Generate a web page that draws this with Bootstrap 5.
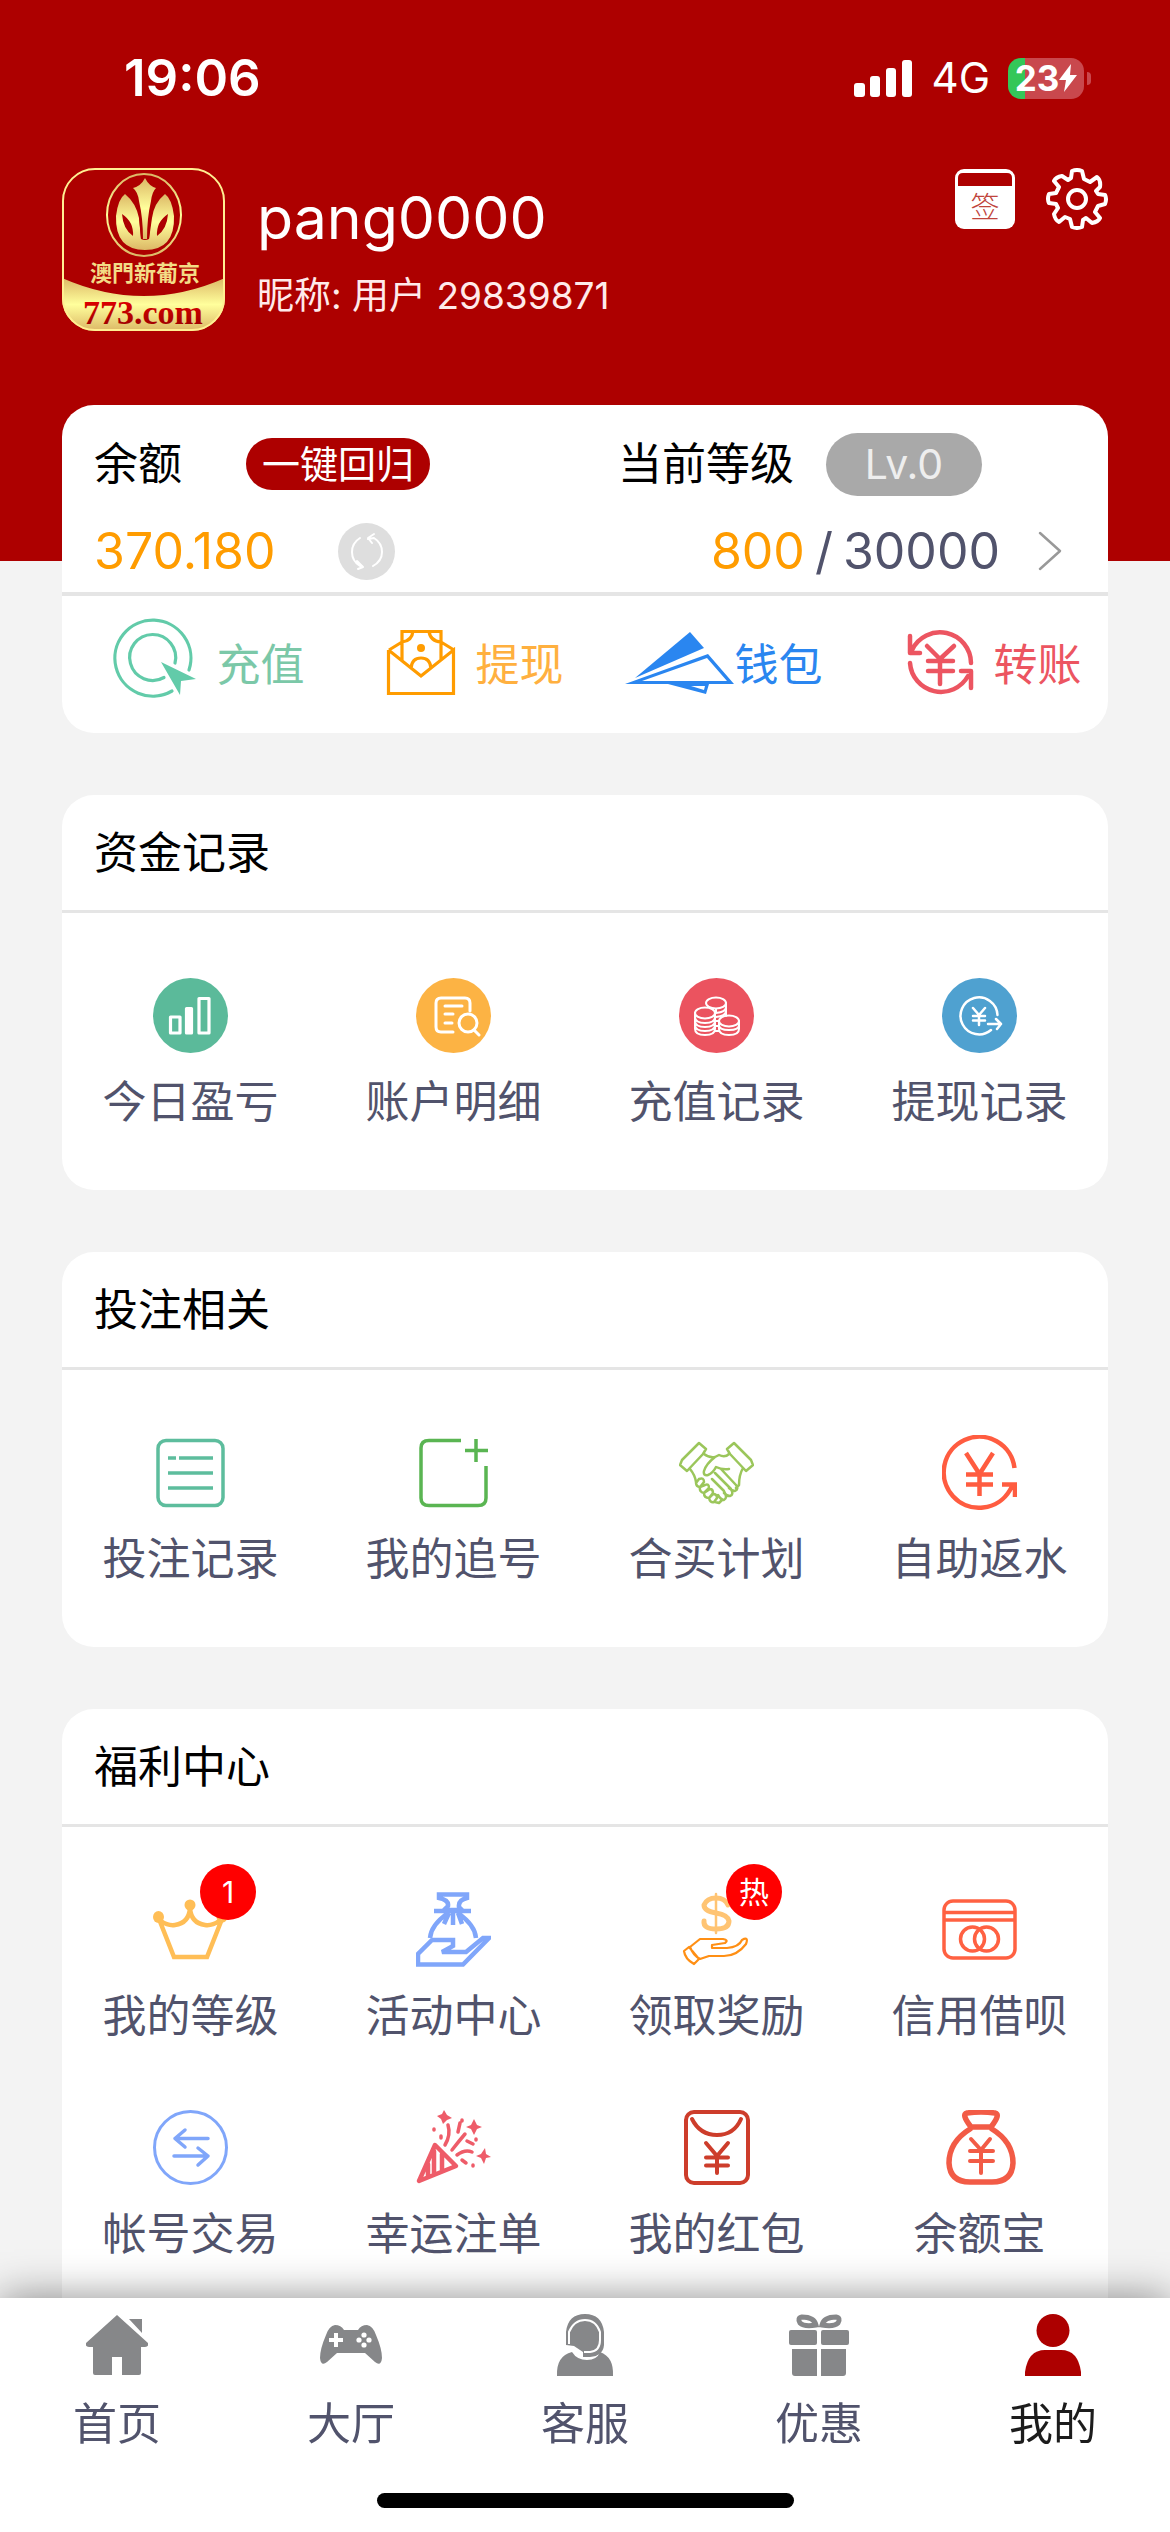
<!DOCTYPE html>
<html lang="zh-CN">
<head>
<meta charset="utf-8">
<meta name="viewport" content="width=device-width, initial-scale=1">
<title>我的</title>
<link href="https://cdn.jsdelivr.net/npm/bootstrap@5.3.0/dist/css/bootstrap.min.css" rel="stylesheet">
<style>
:root { --brand: #ad0000; --ink: #51536c; --line: #e5e5e5; }
body { background: #f3f3f3; color: #000; font-family: Inter, "Noto Sans CJK SC", sans-serif; font-size: 44px; line-height: 66px; }
a { color: inherit; text-decoration: none; }
svg { display: block; flex: none; }
.ln { fill: none; stroke: currentColor; stroke-linecap: round; stroke-linejoin: round; }

.top-zone { background: var(--brand); color: #fff; padding-bottom: 230px; }
.status-bar { height: 156px; padding: 0 79px 0 124px; }
.clock { font-size: 51px; font-weight: 600; }
.net { font-size: 42px; margin: 0 18px 0 20px; }
.battery { width: 76px; height: 41px; border-radius: 13px; font-size: 35px; font-weight: 700; line-height: 41px; background: linear-gradient(90deg, #34c759 23%, #c9484d 23%); margin-right: 3px; }
.nub { width: 4px; height: 13px; border-radius: 0 4px 4px 0; background: #c9484d; }
.profile { padding: 12px 62px 0; }
.user-box { margin-left: 32px; padding-top: 14px; }
.user-name { font-size: 59px; font-weight: 400; line-height: 72px; margin: 0; }
.nick { font-size: 37px; line-height: 54px; margin-top: 15px; color: #ffeaea; }
.tools { gap: 31px; }
.plain { border: 0; background: none; padding: 0; color: inherit; }

.sheet { background: #fff; border-radius: 32px; margin: 0 62px 62px; }
.wallet { margin-top: -156px; }
.wallet-top { padding: 26px 46px 12px 32px; border-bottom: 4px solid var(--line); }
.line-a { height: 63px; }
.line-b { height: 58px; margin-top: 28px; font-size: 50px; }
.pill-red { background: var(--brand); color: #fff; border: 0; border-radius: 26px; height: 52px; width: 184px; font-size: 38px; line-height: 52px; padding: 0; margin-left: 64px; }
.pill-grey { background: #a9a9a9; color: #eee; border-radius: 32px; width: 156px; height: 63px; line-height: 63px; font-size: 41px; margin-left: 32px; }
.gold { color: #ff9c00; }
.slate { color: var(--ink); }
.slash { margin: 0 10px; }
.chev { margin-left: 38px; color: #999; }
.right-half { padding-left: 40px; }
.refresh { margin-left: 62px; }
.actions { padding: 20px 0 19px 14px; margin-right: -4px; }
.actions a { flex: 1 1 0; }
.t-green { color: #7bc8a8; } .t-amber { color: #ffb03f; } .t-blue { color: #2a86f0; } .t-red { color: #ec5561; }

.sheet-title { font-size: 44px; font-weight: 400; line-height: 66px; margin: 0; padding: 25px 32px 24px; border-bottom: 3px solid var(--line); }
.tiles { margin: 0 -3px; padding: 65px 0 55px; row-gap: 61px; }
.tile { display: flex; flex-direction: column; align-items: center; gap: 16px; padding: 0; color: var(--ink); }
.tile-icon { position: relative; }
.flag { position: absolute; left: 47px; top: -28px; width: 56px; height: 56px; border-radius: 50%; background: #f00; color: #fff; font-size: 30px; line-height: 56px; text-align: center; }
.last-sheet { margin-bottom: 0; }

.tab-bar { background: #fff; box-shadow: 0 0 40px rgba(0,0,0,.45); padding: 16px 0 24px; color: var(--ink); }
.tab-bar a { flex: 1 1 0; display: flex; flex-direction: column; align-items: center; gap: 15px; }
.tab-bar svg { color: #868789; }
.tab-bar .now { color: #1c1c1c; }
.tab-bar .now svg { color: var(--brand); }
.home-line { width: 417px; height: 15px; border-radius: 8px; background: #000; margin: 36px auto 0; }
</style>
<script src="https://cdn.jsdelivr.net/npm/bootstrap@5.3.0/dist/js/bootstrap.bundle.min.js"></script>
</head>
<body class="d-flex flex-column min-vh-100">

<header class="top-zone">
  <div class="status-bar d-flex align-items-center justify-content-between">
    <span class="clock">19:06</span>
    <div class="d-flex align-items-center">
      <svg width="58" height="37" viewBox="0 0 58 37" fill="#fff"><rect y="23" width="11" height="14" rx="3"/><rect x="16" y="16" width="10" height="21" rx="3"/><rect x="32" y="8" width="10" height="29" rx="3"/><rect x="48" width="10" height="37" rx="3"/></svg>
      <span class="net">4G</span>
      <span class="battery d-flex align-items-center justify-content-center">23<svg width="18" height="28" viewBox="0 0 18 28" fill="#fff"><path d="M12 0 0 16h7L5 28 18 11h-7z"/></svg></span>
      <span class="nub"></span>
    </div>
  </div>
  <div class="profile d-flex align-items-start">
    <svg width="163" height="163" viewBox="0 0 163 163" role="img" aria-label="澳門新葡京">
      <defs>
        <linearGradient id="gold1" x1="0" y1="0" x2="0" y2="1"><stop offset="0" stop-color="#dcb866"/><stop offset=".5" stop-color="#ffff9c"/><stop offset="1" stop-color="#dcb866"/></linearGradient>
        <linearGradient id="redtext" x1="0" y1="0" x2="0" y2="1"><stop offset="0" stop-color="#f00000"/><stop offset="1" stop-color="#900000"/></linearGradient>
        <clipPath id="logoClip"><rect width="163" height="163" rx="33"/></clipPath>
      </defs>
      <g clip-path="url(#logoClip)">
        <rect width="163" height="163" fill="#ad0000"/>
        <path d="M0 110Q82 146 163 110V163H0Z" fill="url(#gold1)"/>
      </g>
      <rect x="1" y="1" width="161" height="161" rx="32" fill="none" stroke="#ffef92" stroke-width="2"/>
      <ellipse cx="82" cy="47" rx="37" ry="41" fill="none" stroke="url(#gold1)" stroke-width="2"/>
      <path d="M63 26Q56 31 54 48Q53 82 83 82T112 48Q110 31 103 26Q92 35 90 50L87 71Q83 73 79 71L77 50Q74 35 63 26Z" fill="url(#gold1)"/>
      <path d="M69 18H97L90 36 87 71H79L76 36Z" fill="#ad0000"/>
      <path d="M83 10Q87 18 94 20Q90 24 89 33Q85 50 85 71H81Q81 50 77 33Q76 24 71 20Q79 18 83 10Z" fill="url(#gold1)"/>
      <path d="M60 46Q72 54 71 68Q61 61 60 46ZM106 46Q94 54 95 68Q105 61 106 46Z" fill="#ad0000"/>
      <text x="83" y="113" text-anchor="middle" font-family="'Liberation Serif','Noto Sans CJK TC',serif" font-weight="700" font-size="22" fill="#f3dc86">澳門新葡京</text>
      <text x="81" y="156" text-anchor="middle" font-family="'Liberation Serif',serif" font-weight="700" font-size="34" fill="url(#redtext)">773.com</text>
    </svg>
    <div class="user-box flex-grow-1">
      <h1 class="user-name">pang0000</h1>
      <div class="nick">昵称: 用户 29839871</div>
    </div>
    <div class="tools d-flex">
      <button class="plain" type="button" aria-label="签到">
        <svg width="60" height="61" viewBox="0 0 60 61"><rect width="60" height="60" rx="9" fill="#fff"/><path d="M3 17V9Q3 4 8 4H52Q57 4 57 9V17Z" fill="#ad0000"/><text x="30" y="49" text-anchor="middle" font-size="29" font-family="'Noto Sans CJK SC',sans-serif" font-weight="300" fill="#c0443c">签</text></svg>
      </button>
      <button class="plain" type="button" aria-label="设置">
        <svg width="62" height="62" viewBox="0 0 62 62"><path class="ln" stroke-width="4" d="M26 3Q31 1 36 3L38 11 44 14 51 9Q55 12 54 19L50 23 52 26 59 27Q61 31 59 36L52 38 49 44 54 50Q52 54 46 55L40 50 37 52 36 59Q31 61 26 59L24 51 19 49 13 54Q9 52 8 46L12 40 10 36 3 35Q1 31 3 26L10 25 13 19 8 13Q10 9 16 8L22 12 25 10Z"/><circle class="ln" cx="31" cy="31" r="9" stroke-width="4"/></svg>
      </button>
    </div>
  </div>
</header>

<main class="d-flex flex-column flex-grow-1">
  <section class="sheet wallet">
    <div class="wallet-top">
      <div class="row g-0 line-a align-items-center">
        <div class="col-6 d-flex align-items-center"><span>余额</span><button class="pill-red" type="button">一键回归</button></div>
        <div class="col-6 right-half d-flex align-items-center"><span>当前等级</span><span class="pill-grey text-center">Lv.0</span></div>
      </div>
      <div class="line-b d-flex align-items-center">
        <span class="gold">370.180</span>
        <button class="plain refresh" type="button" aria-label="刷新">
          <svg width="57" height="57" viewBox="0 0 57 57" color="#fff"><circle cx="28.5" cy="28.5" r="28.5" fill="#dedede"/><path class="ln" stroke-width="2" d="M22 15Q14 20 14 29Q14 38 22 43M19 38 25 44 20 46M35 43Q44 38 44 29Q44 20 36 15L30 16M36 11 30 15 34 20"/></svg>
        </button>
        <a href="#level" class="slate d-flex align-items-center ms-auto"><span class="gold">800</span><span class="slash">/</span><span>30000</span>
          <svg class="chev" width="24" height="40" viewBox="0 0 24 40"><path class="ln" stroke-width="2.5" d="M2 2 22 20 2 38"/></svg></a>
      </div>
    </div>
    <nav class="actions d-flex">
      <a href="#deposit" class="d-flex align-items-center justify-content-center t-green">
        <svg width="110" height="98" viewBox="0 0 110 98" color="#62cba9"><path class="ln" stroke-width="3.2" d="M65 75A38 38 0 1 1 82 54M57 61.5A23 23 0 1 1 68 47"/><path fill="currentColor" d="M54 46 89 63 74 65 73 79Z"/></svg>充值</a>
      <a href="#withdraw" class="d-flex align-items-center justify-content-center t-amber">
        <svg width="110" height="98" viewBox="0 0 110 98" fill="none" stroke="#ff9c00" stroke-width="3.2"><path d="M22.5 34V77.5H87.5V34L55 60 22.5 34M36 44V15.5H75V44M36 26 23 34M75 26 88 34M36 26Q46 25 47 15M75 26Q64 25 63 15M45 52Q46 42 55 42T65 52"/><circle cx="55" cy="32" r="4" fill="#ff9c00" stroke="none"/></svg>提现</a>
      <a href="#wallet" class="d-flex align-items-center justify-content-center t-blue">
        <svg width="110" height="98" viewBox="0 0 110 98" fill="#2a86f0"><path d="M65 16 79 32 10 62Z"/><path fill-rule="evenodd" d="M0 68 83 38 109 68ZM17 65H102L82 42ZM43 68 81 78 84 68ZM66 70 79 74 80 70Z"/></svg>钱包</a>
      <a href="#transfer" class="d-flex align-items-center justify-content-center t-red">
        <svg width="110" height="98" viewBox="0 0 110 98"><path class="ln" stroke-width="4.5" d="M87 47A31 31 0 0 0 28 34M26 20V37H36M26 47A31 31 0 0 0 84 60M77 55H87V72M43 30 56 43 70 30M56 43V68M44 45H69M44 55H69"/></svg>转账</a>
    </nav>
  </section>

  <section class="sheet">
    <h2 class="sheet-title">资金记录</h2>
    <div class="row tiles">
      <a class="col-3 tile" href="#today"><svg width="75" height="75" viewBox="0 0 75 75"><circle cx="37.5" cy="37.5" r="37.5" fill="#5bba9a"/><g fill="none" stroke="#fff" stroke-width="3.2" stroke-linejoin="round"><path d="M17.5 39H27V55H17.5ZM46 20.5H56V55H46Z"/><path fill="#fff" d="M33.5 30.5H38.5V55H33.5Z"/></g></svg>今日盈亏</a>
      <a class="col-3 tile" href="#detail"><svg width="75" height="75" viewBox="0 0 75 75" color="#fff"><circle cx="37.5" cy="37.5" r="37.5" fill="#fcb344"/><path class="ln" stroke-width="3" d="M54 33V25Q54 20 49 20H25Q20 20 20 25V49Q20 54 25 54H37M29 28H46M29 36H37M29 45H36M58 52 63 57"/><circle class="ln" cx="52" cy="45" r="9" stroke-width="3"/></svg>账户明细</a>
      <a class="col-3 tile" href="#deposits"><svg width="75" height="75" viewBox="0 0 75 75" color="#fff"><circle cx="37.5" cy="37.5" r="37.5" fill="#eb535f"/><g class="ln" stroke-width="2"><ellipse cx="37" cy="25" rx="10" ry="5.5"/><ellipse cx="26" cy="35" rx="10" ry="5.5"/><ellipse cx="50" cy="43" rx="10" ry="5.5"/><path d="M16 35V51Q16 57 26 57T36 51V35M16 39Q16 45 26 45T36 39M16 43Q16 49 26 49T36 43M16 47Q16 53 26 53T36 47M40 43V51Q40 57 50 57T60 51V43M40 47Q40 52 50 52T60 47M47 25V38M37 35Q47 34 47 29M37 39Q47 38 47 33M37 31V35M36 43H40M36 48H40M36 53H40"/></g></svg>充值记录</a>
      <a class="col-3 tile" href="#withdrawals"><svg width="75" height="75" viewBox="0 0 75 75" color="#fff"><circle cx="37.5" cy="37.5" r="37.5" fill="#4fa1d0"/><path class="ln" stroke-width="2.5" d="M55.500 37A18.500 18.500 0 1 0 49 52M46 46H59M54 41 59 46 55 51M31 30 37 37 43 30M37 37V47M31 38H43M31 42.5H43"/></svg>提现记录</a>
    </div>
  </section>

  <section class="sheet">
    <h2 class="sheet-title">投注相关</h2>
    <div class="row tiles">
      <a class="col-3 tile" href="#bets"><svg width="75" height="75" viewBox="0 0 75 75" color="#5dbd9d"><rect class="ln" x="5" y="5.5" width="65" height="65" rx="8" stroke-width="3.5"/><path d="M15 23H23M26 23H60M15 38H60M15 53H60" stroke="currentColor" stroke-width="3.5"/></svg>投注记录</a>
      <a class="col-3 tile" href="#chase"><svg width="75" height="75" viewBox="0 0 75 75" color="#5ab552"><path fill="none" stroke="currentColor" stroke-width="3.5" d="M45 5.5H13Q5 5.5 5 13V63Q5 70.5 13 70.5H62Q70 70.5 70 63V31M60 4V27M49 15.5H72"/></svg>我的追号</a>
      <a class="col-3 tile" href="#group"><svg width="75" height="75" viewBox="0 0 75 75" color="#9bc65b"><path class="ln" stroke-width="2.5" d="M20 8 27 14 24 19 8 36 1 30 3 25ZM55 8 48 14 51 19 67 36 74 30 72 25ZM25 19Q30 23 36 22M50 19Q46 23 40 20L36 22Q27 29 25 36Q24 41 29 40Q34 38 37 32Q43 35 50 34M42 34 57 50Q60 54 56 56 53 56 50 53M36 38 52 54Q55 60 51 61 48 61 45 58M33 44 45 56Q49 63 45 65 42 65 39 60M64 33Q60 40 60 50L57 53M11 34Q16 40 17 47Q17 52 21 52L25 47Q25 42 20 44L17 48M21 52Q20 57 25 58L30 53Q30 48 26 50ZM25 58Q25 63 30 63L34 58Q34 54 31 54ZM30 63Q31 68 35 67L38 63Q38 59 34 59ZM36 67 40 68 43 65"/></svg>合买计划</a>
      <a class="col-3 tile" href="#rebate"><svg width="75" height="75" viewBox="0 0 75 75" color="#ff5c40"><path fill="none" stroke="currentColor" stroke-width="4.5" d="M72.5 33A35.5 35.5 0 1 0 68 55L71 50M60 49.5H73V62M24 18 37.5 39 51 18M37.5 39V61M24 39.5H51M24 49.5H51"/></svg>自助返水</a>
    </div>
  </section>

  <section class="sheet last-sheet flex-grow-1">
    <h2 class="sheet-title">福利中心</h2>
    <div class="row tiles">
      <a class="col-3 tile" href="#rank"><span class="tile-icon"><svg width="75" height="75" viewBox="0 0 75 75" color="#ffbe56"><g fill="currentColor"><ellipse cx="5.5" cy="25" rx="5.5" ry="6"/><circle cx="37" cy="13" r="5.500"/><circle cx="69" cy="25" r="5.5"/></g><path fill="none" stroke="currentColor" stroke-width="4.5" d="M6 27 21 65H54L69 27M8 29Q15 34 22 33Q36 31 37 16Q38 31 52 33Q59 34 66 29"/></svg><span class="flag">1</span></span>我的等级</a>
      <a class="col-3 tile" href="#events"><svg width="75" height="75" viewBox="0 0 75 75" color="#80a6fa"><path fill="none" stroke="currentColor" stroke-width="4.5" d="M23 2.5H51V6Q42 8 43 15L46 18H28L32 14Q33 8 23 6ZM18 19H55M32 21Q15 33 14 46M42 21Q59 33 60 46M33 21 28 32M37 21V33M42 21 46 32M2 72.500V62L16 48H37V54L26 60H50L67 46 73 46 47 72.5Z"/></svg>活动中心</a>
      <a class="col-3 tile" href="#reward"><span class="tile-icon"><svg width="75" height="75" viewBox="0 0 75 75"><g color="#ffc473"><path class="ln" stroke-width="5" d="M49 13Q46 6 37 6T25 13Q25 19 37 21T50 29Q50 37 37 37T25 29"/><path class="ln" stroke-width="2.5" d="M37 2V41"/></g><path class="ln" color="#ff8f14" stroke-width="2.2" d="M5 59 10 55 20 67 15 72Q6 67 5 59ZM11 55 21 47 44 47Q50 48 46 51L33 53V56H48Q60 55 63 48Q70 44 67 52Q58 64 45 64H30L21 67Q14 63 11 55Z"/></svg><span class="flag">热</span></span>领取奖励</a>
      <a class="col-3 tile" href="#credit"><svg width="75" height="75" viewBox="0 0 75 75" color="#ff6142"><g fill="none" stroke="currentColor" stroke-width="3.5"><rect x="2" y="9" width="71" height="57" rx="9"/><path d="M1 20.5H74M1 28H74"/><circle cx="30.500" cy="47" r="12"/><circle cx="44.5" cy="47" r="12"/></g></svg>信用借呗</a>
      <a class="col-3 tile" href="#trade"><svg width="75" height="75" viewBox="0 0 75 75" color="#80a6fa"><circle class="ln" cx="37.5" cy="37.5" r="36" stroke-width="3"/><path class="ln" stroke-width="3.5" d="M55 28.5H22L32 20M22 28.5 32 37M21 46H55L45 38M55 46 45 55"/></svg>帐号交易</a>
      <a class="col-3 tile" href="#lucky"><svg width="75" height="75" viewBox="0 0 75 75" color="#ee5c69"><path class="ln" stroke-width="4.500" d="M3 71 19 35 40 56ZM18 41V63M12 54V66M26 44V60"/><path class="ln" stroke-width="3.5" d="M29 35Q35 25 32 15M36 40Q43 31 49 24M41 45Q49 39 56 42M42 22 44 13M18 19V20M25 26V28M60 29V30M51 31 57 34M46 50 50 53M57 55V56M46 10V11"/><path fill="currentColor" d="M28 0 31 5 36 8 31 10 27 14 25 9 21 6 26 4ZM58 9 61 15 66 17 61 19 58 25 55 19 50 17 55 15ZM69 38 70 44 75 47 70 48 68 54 65 48 60 46 65 44Z"/></svg>幸运注单</a>
      <a class="col-3 tile" href="#packet"><svg width="75" height="75" viewBox="0 0 75 75" color="#cd3d2b"><rect class="ln" x="7" y="2" width="62" height="71" rx="8" stroke-width="4"/><path class="ln" stroke-width="4" d="M13 9Q21 25 38 25T62 9M27 33 38 46 49 33M38 46V63M27 47.5H49M27 55.5H49"/></svg>我的红包</a>
      <a class="col-3 tile" href="#yuebao"><svg width="75" height="75" viewBox="0 0 75 75" color="#f25b46"><path class="ln" stroke-width="5.500" d="M29 17Q19 4 25 3 39 1 53 3 59 4 49 17ZM28 19Q7 32 7 53Q8 72 28 72H50Q70 72 71 53Q71 32 50 19"/><path class="ln" stroke-width="4" d="M29 29 39 40 48 29M39 40V63M28 41H51M28 51H51"/></svg>余额宝</a>
    </div>
  </section>
</main>

<nav class="tab-bar fixed-bottom">
  <div class="d-flex">
    <a href="#home"><svg width="62" height="62" viewBox="0 0 62 62" fill="currentColor"><path d="M31 1 62 29Q63 33 59 33H55V59Q55 61 53 61H36V43H26V61H9Q7 61 7 59V33H3Q-1 33 0 29ZM43 5H56V19Z"/></svg>首页</a>
    <a href="#hall"><svg width="62" height="62" viewBox="0 0 62 62" fill="currentColor"><path fill-rule="evenodd" d="M15 11Q21 11 24 16H38Q41 11 47 11Q53 12 56 21Q62 35 62 44Q61 53 55 48L45 39H17L7 48Q1 53 0 44Q0 35 6 21Q9 12 15 11ZM14 19V24H9V28H14V33H18V28H23V24H18V19Z"/><g fill="#fff"><circle cx="44" cy="21" r="2.6"/><circle cx="44" cy="31" r="2.6"/><circle cx="39" cy="26" r="2.6"/><circle cx="49" cy="26" r="2.6"/></g></svg>大厅</a>
    <a href="#service"><svg width="62" height="62" viewBox="0 0 62 62" fill="currentColor"><path d="M3 62Q2 42 18 38Q23 46 33 46Q43 46 46 38Q60 43 59 62Z"/><path d="M12 31V18Q14 0 31 0T50 18V31Q49 42 36 43H29V38L20 32Z"/><path fill="none" stroke="#fff" stroke-width="2" d="M15 30V18Q20 6 31 6T46 18V26Q46 37 36 38H30"/></svg>客服</a>
    <a href="#offers"><svg width="62" height="62" viewBox="0 0 62 62" fill="currentColor"><rect x="1" y="16" width="28" height="15" rx="2"/><rect x="33" y="16" width="28" height="15" rx="2"/><path d="M4 35H29V62H7Q4 62 4 59ZM33 35H58V59Q58 62 55 62H33Z"/><path fill="none" stroke="currentColor" stroke-width="5" d="M28 11Q26 3 14 3 9 4 12 9 16 13 28 11ZM34 11Q36 3 48 3 53 4 50 9 46 13 34 11Z"/></svg>优惠</a>
    <a href="#me" class="now" aria-current="page"><svg width="62" height="62" viewBox="0 0 62 62" fill="currentColor"><circle cx="31" cy="16.5" r="16.5"/><path d="M3 62V58Q6 36 23 36H39Q56 36 59 58V62Z"/></svg>我的</a>
  </div>
  <div class="home-line"></div>
</nav>
</body>
</html>
